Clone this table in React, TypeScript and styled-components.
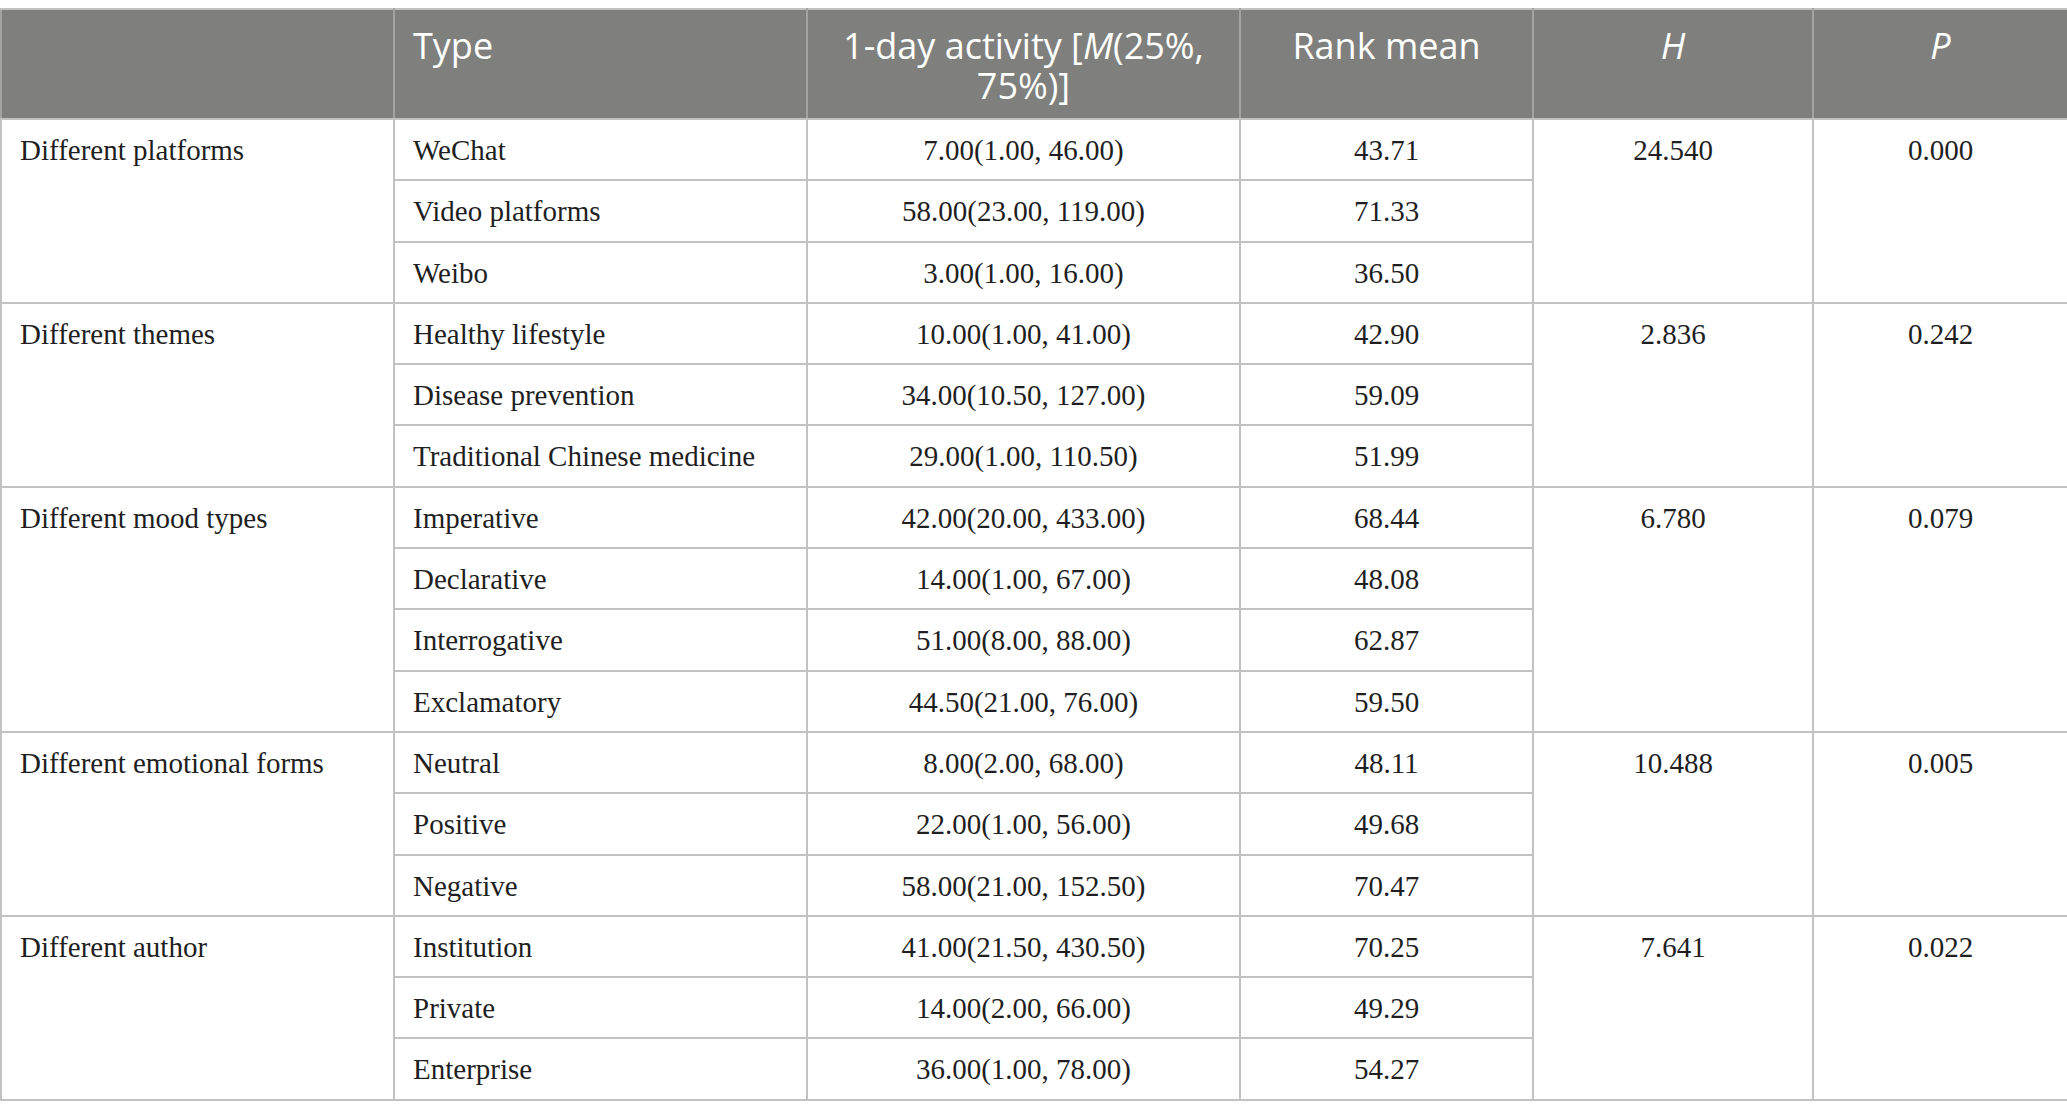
import React from "react";
import styled, { createGlobalStyle } from "styled-components";

const GlobalStyle = createGlobalStyle`
  html, body {
    margin: 0;
    padding: 0;
    background: #ffffff;
  }
  body {
    padding-top: 8px;
  }
`;

const Table = styled.table`
  width: 2067px;
  table-layout: fixed;
  border-collapse: collapse;
  border: 2px solid #c2c2c2;
`;

const Col = styled.col<{ $w: number }>`
  width: ${(p) => p.$w}px;
`;

const HeadRow = styled.tr`
  height: 110px;
  background: #7f807e;
`;

const HeadCell = styled.th<{ $align?: "left" | "center" }>`
  font-family: "Open Sans", "Noto Sans", sans-serif;
  font-weight: 400;
  font-size: 36px;
  line-height: 40px;
  color: #ffffff;
  text-align: ${(p) => p.$align ?? "center"};
  vertical-align: top;
  padding: 16px 18px 0 18px;
  border: 2px solid #a3a3a3;
  border-top-color: #c2c2c2;
  border-bottom-color: #c2c2c2;
`;

const HeadLine = styled.span`
  display: block;
  height: 40px;
  overflow: visible;
  white-space: nowrap;
`;

const BodyRow = styled.tr`
  height: 61.3px;
`;

const Cell = styled.td<{ $align?: "left" | "center" }>`
  font-family: "Liberation Serif", "Times New Roman", serif;
  font-size: 29px;
  line-height: 36px;
  color: #1f1f1f;
  text-align: ${(p) => p.$align ?? "center"};
  vertical-align: top;
  padding: 12px 18px 0 18px;
  border: 2px solid #c2c2c2;
  white-space: nowrap;
`;

type Item = { type: string; activity: string; rank: string };
type Group = { label: string; h: string; p: string; items: Item[] };

const groups: Group[] = [
  {
    label: "Different platforms",
    h: "24.540",
    p: "0.000",
    items: [
      { type: "WeChat", activity: "7.00(1.00, 46.00)", rank: "43.71" },
      { type: "Video platforms", activity: "58.00(23.00, 119.00)", rank: "71.33" },
      { type: "Weibo", activity: "3.00(1.00, 16.00)", rank: "36.50" },
    ],
  },
  {
    label: "Different themes",
    h: "2.836",
    p: "0.242",
    items: [
      { type: "Healthy lifestyle", activity: "10.00(1.00, 41.00)", rank: "42.90" },
      { type: "Disease prevention", activity: "34.00(10.50, 127.00)", rank: "59.09" },
      { type: "Traditional Chinese medicine", activity: "29.00(1.00, 110.50)", rank: "51.99" },
    ],
  },
  {
    label: "Different mood types",
    h: "6.780",
    p: "0.079",
    items: [
      { type: "Imperative", activity: "42.00(20.00, 433.00)", rank: "68.44" },
      { type: "Declarative", activity: "14.00(1.00, 67.00)", rank: "48.08" },
      { type: "Interrogative", activity: "51.00(8.00, 88.00)", rank: "62.87" },
      { type: "Exclamatory", activity: "44.50(21.00, 76.00)", rank: "59.50" },
    ],
  },
  {
    label: "Different emotional forms",
    h: "10.488",
    p: "0.005",
    items: [
      { type: "Neutral", activity: "8.00(2.00, 68.00)", rank: "48.11" },
      { type: "Positive", activity: "22.00(1.00, 56.00)", rank: "49.68" },
      { type: "Negative", activity: "58.00(21.00, 152.50)", rank: "70.47" },
    ],
  },
  {
    label: "Different author",
    h: "7.641",
    p: "0.022",
    items: [
      { type: "Institution", activity: "41.00(21.50, 430.50)", rank: "70.25" },
      { type: "Private", activity: "14.00(2.00, 66.00)", rank: "49.29" },
      { type: "Enterprise", activity: "36.00(1.00, 78.00)", rank: "54.27" },
    ],
  },
];

export default function App() {
  return (
    <>
      <GlobalStyle />
      <Table>
        <colgroup>
          <Col $w={393} />
          <Col $w={413} />
          <Col $w={433} />
          <Col $w={293} />
          <Col $w={280} />
          <Col $w={255} />
        </colgroup>
        <thead>
          <HeadRow>
            <HeadCell $align="left" />
            <HeadCell $align="left">Type</HeadCell>
            <HeadCell>
              <HeadLine>
                1-day activity [<i>M</i>(25%,
              </HeadLine>
              <HeadLine>75%)]</HeadLine>
            </HeadCell>
            <HeadCell>Rank mean</HeadCell>
            <HeadCell>
              <i>H</i>
            </HeadCell>
            <HeadCell>
              <i>P</i>
            </HeadCell>
          </HeadRow>
        </thead>
        <tbody>
          {groups.map((g) =>
            g.items.map((it, i) => (
              <BodyRow key={g.label + it.type}>
                {i === 0 && (
                  <Cell $align="left" rowSpan={g.items.length}>
                    {g.label}
                  </Cell>
                )}
                <Cell $align="left">{it.type}</Cell>
                <Cell>{it.activity}</Cell>
                <Cell>{it.rank}</Cell>
                {i === 0 && <Cell rowSpan={g.items.length}>{g.h}</Cell>}
                {i === 0 && <Cell rowSpan={g.items.length}>{g.p}</Cell>}
              </BodyRow>
            ))
          )}
        </tbody>
      </Table>
    </>
  );
}
